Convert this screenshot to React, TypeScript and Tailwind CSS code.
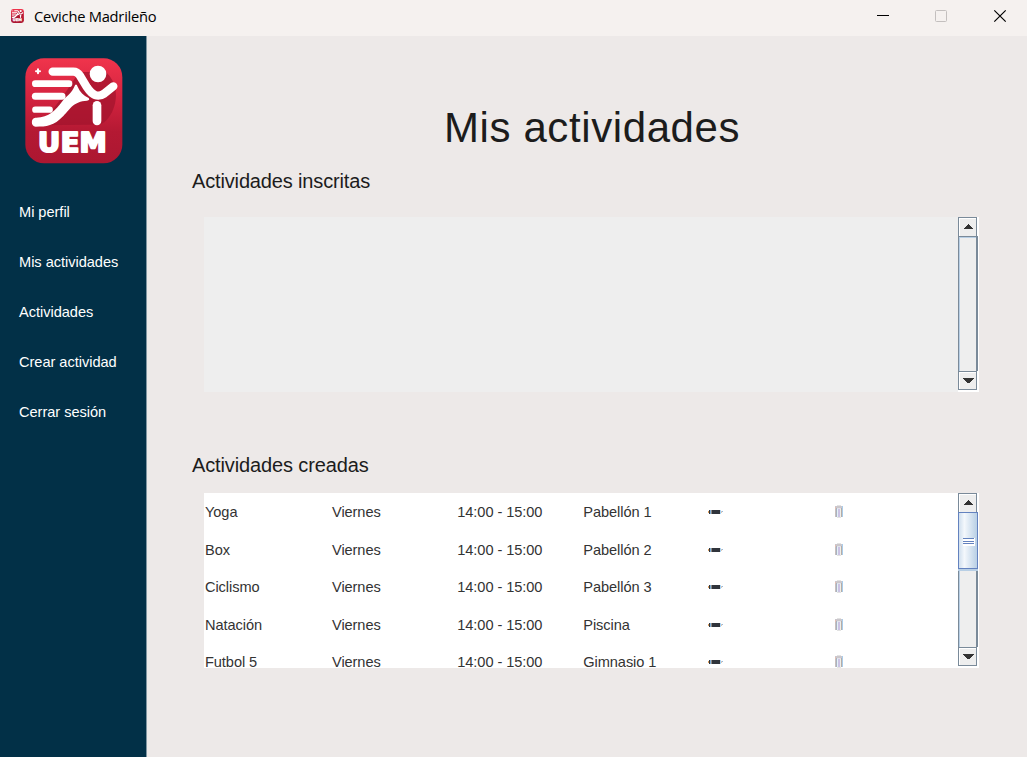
import React from "react";

const menu = ["Mi perfil", "Mis actividades", "Actividades", "Crear actividad", "Cerrar sesión"];

const created = [
  ["Yoga", "Viernes", "14:00 - 15:00", "Pabellón 1"],
  ["Box", "Viernes", "14:00 - 15:00", "Pabellón 2"],
  ["Ciclismo", "Viernes", "14:00 - 15:00", "Pabellón 3"],
  ["Natación", "Viernes", "14:00 - 15:00", "Piscina"],
  ["Futbol 5", "Viernes", "14:00 - 15:00", "Gimnasio 1"],
];

function Logo({ className, id }: { className: string; id: string }) {
  return (
    <svg className={className} viewBox="33 30 294 318" preserveAspectRatio="none">
      <defs>
        <linearGradient id={id} x1="0" y1="0" x2="0" y2="1">
          <stop offset="0" stopColor="#f0344c" />
          <stop offset="0.35" stopColor="#d62440" />
          <stop offset="0.7" stopColor="#b41933" />
          <stop offset="1" stopColor="#ac1731" />
        </linearGradient>
      </defs>
      <rect x="34" y="31" width="291" height="315" rx="56" fill={`url(#${id})`} />
      <path d="M195 72 H275 C308 100 315 150 294 193 Q280 220 262 228 L225 230 L80 232 L150 140 Z" fill="#a3142e" opacity="0.75" />
      <g fill="none" stroke="#fff" strokeLinecap="round" strokeLinejoin="round">
        <path d="M72 64 V76 M66 70 H78" strokeWidth="6" />
        <path d="M116 71 H178 Q190 71 197 82 L219 118 Q243 155 270 137 L298 115" strokeWidth="25" />
        <path d="M64 107 H165" strokeWidth="20" />
        <path d="M64 145 H144" strokeWidth="21" />
        <path d="M64 185 H107" strokeWidth="19" />
        <path d="M249 172 V219" strokeWidth="26" />
      </g>
      <path d="M64 209 C104 210 125 187 145 160 C158 143 172 139 183 112 Q187 106 191 116 C198 132 208 143 224 150 Q229 156 219 158 C178 161 171 180 148 204 C119 234 98 236 65 236 C50 236 50 209 64 209 Z" fill="#fff" />
      <circle cx="252" cy="78" r="25" fill="#fff" />
      <text transform="translate(76 311) scale(1.05 1)" x="-4 61 115" y="0" fontSize="78" fontWeight="700" fill="#fff" stroke="#fff" strokeWidth="6" strokeLinejoin="round" fontFamily="'DejaVu Sans', sans-serif">UEM</text>
    </svg>
  );
}

function ArrowButton({ down = false }: { down?: boolean }) {
  return (
    <div className={`flex w-[21px] shrink-0 bg-white ${down ? "h-[21px]" : "h-[19px]"}`}>
      <div className="flex h-[19px] w-[19px] border border-b-0 border-[#7a8a99] bg-[#eeeeee] shadow-[inset_1px_1px_0_#fff]">
        <svg className="h-[18px] w-[17px]" viewBox="0 0 17 18" shapeRendering="crispEdges">
          {down ? (
            <>
              <path d="M4 6H15V7H14V8H13V9H12V10H11V11H8V10H7V9H6V8H5V7H4Z" fill="#333" />
              <path d="M0 17H17V18H0Z" fill="#7a8a99" />
            </>
          ) : (
            <path d="M9 6H10V7H11V8H12V9H13V10H14V11H5V10H6V9H7V8H8V7H9Z" fill="#333" />
          )}
        </svg>
      </div>
    </div>
  );
}

function ScrollBar({ thumb = false }: { thumb?: boolean }) {
  return (
    <div className="flex w-[21px] flex-col">
      <ArrowButton />
      <div className="flex-1 bg-white pr-px">
        <div className="h-full w-[20px] border border-b-0 border-r-2 border-[#7a8a99] bg-[#eeeeee] shadow-[inset_1px_1px_0_#b8cfe5]">
          {thumb && (
            <div className="-ml-px -mt-px flex h-[59px] w-[20px] flex-col border-b-2 border-[#b8cfe5]">
              <div className="flex flex-1 flex-col items-end justify-center border border-[#6382bf] bg-linear-to-r from-[#d0dfee] via-[#f4f8fc] via-30% to-[#b8cfe5] pr-[2px] pt-[2px]">
                <div className="flex h-[8px] w-[12px] flex-col bg-white">
                  <div className="h-px w-[11px] bg-[#6382bf]" />
                  <div className="mt-[2px] h-px w-[11px] bg-[#6382bf]" />
                  <div className="mt-px h-px w-[11px] bg-[#6382bf]" />
                </div>
              </div>
            </div>
          )}
        </div>
      </div>
      <ArrowButton down />
    </div>
  );
}

function Pencil() {
  return (
    <svg className="-mt-[3px] h-[5px] w-[16px]" viewBox="0 0 16 5" shapeRendering="crispEdges">
      <path d="M0 2h1v2H0z" fill="#d99a58" />
      <path d="M1 1h1v4H1z" fill="#30363d" />
      <path d="M2 1h1v4H2z" fill="#7fb2dc" />
      <path d="M3 1h1v4H3z" fill="#8f8881" />
      <path d="M4 1h8v4H4z" fill="#30343b" />
      <path d="M12 1h1v4h-1z" fill="#a9d5f6" />
      <path d="M13 2h1v2h-1z" fill="#d8c6b8" />
      <path d="M14 2h1v1h-1z" fill="#8fb8e0" />
    </svg>
  );
}

function Trash() {
  return (
    <svg className="-mt-[2px] ml-px h-[14px] w-[8px]" viewBox="0 0 8 14" shapeRendering="crispEdges">
      <path d="M2 0h4v1H2z" fill="#e2e2e2" />
      <path d="M0 1h8v11H0z" fill="#dfe2ea" />
      <path d="M0 1h8v2H0z" fill="#cbc7cc" />
      <path d="M0 2h1v2H0z" fill="#e2bfb4" />
      <path d="M0 4h1v8H0z" fill="#c9c0bd" />
      <path d="M1 3h1v9H1z" fill="#a9b2c0" />
      <path d="M2 4h1v8H2z" fill="#e4f0f7" />
      <path d="M3 4h2v8H3z" fill="#cbc2e4" />
      <path d="M5 4h1v8H5z" fill="#f1efe6" />
      <path d="M6 3h1v9H6z" fill="#b5aca8" />
      <path d="M7 1h1v11H7z" fill="#a9cdeb" />
      <path d="M2 12h4v1H2z" fill="#e2e2e2" />
    </svg>
  );
}

export default function App() {
  return (
    <div className="flex h-[757px] w-[1027px] flex-col overflow-hidden bg-[#ede9e8] font-['Liberation_Sans',Arial,sans-serif] text-[#1c1c1c]">
      <header className="flex h-9 shrink-0 items-center bg-[#f5f1ef] pl-[11px]">
        <Logo className="mb-1 h-[14px] w-[13px]" id="logo-small" />
        <span className="mb-[3px] ml-[10px] flex-1 whitespace-nowrap font-['Open_Sans','Noto_Sans',sans-serif] text-[14.7px] tracking-[-0.24px] text-black">Ceviche Madrileño</span>
        <svg className="h-9 w-[167px]" viewBox="0 0 167 36" fill="none">
          <path d="M17 15.5H29" stroke="#000" />
          <rect x="75.5" y="10.5" width="11" height="11" rx="1" stroke="#c3bfbe" />
          <path d="M134.3 10.3L145.7 21.7M145.7 10.3L134.3 21.7" stroke="#000" strokeWidth="1.2" />
        </svg>
      </header>
      <div className="flex flex-1">
        <aside className="flex w-[147px] shrink-0 flex-col border-r border-[#8096a2] bg-[#023047] pt-[22px]">
          <Logo className="ml-[25px] h-[106px] w-[98px]" id="logo-large" />
          <nav className="mt-[24px] flex flex-col pl-[19px] text-[14.6px] tracking-[-0.03px] text-white">
            {menu.map((item) => (
              <a key={item} className="flex h-[50px] items-center whitespace-nowrap">{item}</a>
            ))}
          </nav>
        </aside>
        <main className="flex flex-1 flex-col pl-[45px]">
          <h1 className="mt-[68px] self-start pl-[252px] text-[42px] leading-[48px] tracking-[0.6px]">Mis actividades</h1>
          <h2 className="mt-[17px] text-[20px] leading-6 tracking-[-0.15px]">Actividades inscritas</h2>
          <section className="ml-3 mt-[24px] flex h-[175px] w-[775px]">
            <div className="w-[754px] bg-[#eeeeee]" />
            <ScrollBar />
          </section>
          <h2 className="mt-[61px] text-[20px] leading-6 tracking-[-0.13px]">Actividades creadas</h2>
          <section className="ml-3 mt-4 flex h-[175px] w-[775px]">
            <div className="h-[175px] w-[754px] overflow-hidden bg-white pt-[1.5px] text-[14.6px] tracking-[-0.08px] text-[#333]">
              {created.map((row) => (
                <div key={row[0]} className="grid h-[37.5px] grid-cols-[127px_125.3px_126px_125.7px_126px_124px] items-center whitespace-nowrap">
                  {row.map((cell, i) => (
                    <span key={i} className="pl-px">{cell}</span>
                  ))}
                  <Pencil />
                  <Trash />
                </div>
              ))}
            </div>
            <ScrollBar thumb />
          </section>
        </main>
      </div>
    </div>
  );
}
